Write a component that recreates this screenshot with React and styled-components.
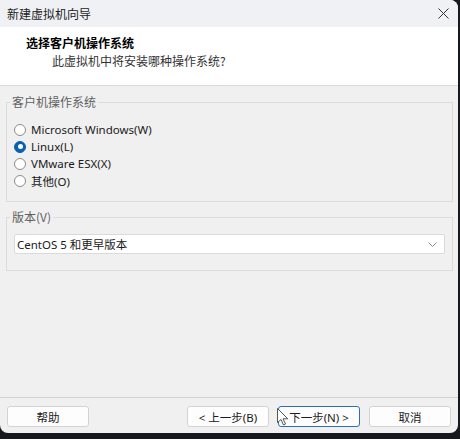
import React from "react";
import styled, { createGlobalStyle } from "styled-components";

const GlobalStyle = createGlobalStyle`
  html, body {
    margin: 0;
    padding: 0;
    background: #16181d;
  }
  * {
    box-sizing: border-box;
  }
`;

const sans = `"Noto Sans", "Noto Sans CJK SC", sans-serif`;
const cjk = `"Noto Sans CJK SC", "Noto Sans", sans-serif`;

const Desktop = styled.div`
  width: 460px;
  height: 439px;
  background: #16181d;
  overflow: hidden;
`;

const Window = styled.div`
  width: 458px;
  height: 433px;
  background: #f0f0f0;
  border-radius: 0 8px 8px 8px;
  overflow: hidden;
  display: flex;
  flex-direction: column;
  font-family: ${sans};
  color: #1a1a1a;
`;

const TitleBar = styled.div`
  height: 27px;
  flex-shrink: 0;
  background: #eff1f5;
  display: flex;
  align-items: center;
  justify-content: space-between;
  padding: 0 9px 0 7px;
`;

const Title = styled.span`
  font-family: ${cjk};
  font-size: 12px;
  color: #1b1b1b;
`;

const CloseButton = styled.button`
  width: 12px;
  height: 12px;
  padding: 0;
  border: none;
  background: transparent;
  display: flex;
  align-items: center;
  justify-content: center;
  color: #333;
`;

const Header = styled.div`
  height: 59px;
  flex-shrink: 0;
  background: #ffffff;
  border-bottom: 1px solid #d9d9d9;
  padding: 7px 0 0 26px;
  display: flex;
  flex-direction: column;
`;

const HeaderTitle = styled.div`
  font-family: ${cjk};
  font-size: 12px;
  font-weight: 700;
  line-height: 18px;
  color: #000;
`;

const HeaderSub = styled.div`
  font-family: ${cjk};
  font-size: 12px;
  line-height: 18px;
  color: #333;
  margin-left: 26px;
`;

const Body = styled.div`
  flex: 1;
  padding: 8px 5px 0 6px;
  display: flex;
  flex-direction: column;
  gap: 7px;
`;

const Group = styled.fieldset`
  margin: 0;
  border: 1px solid #dcdcdc;
  padding: 0 7px ${({ $bottom }) => $bottom}px 7px;
  min-width: 0;
`;

const Legend = styled.legend`
  font-family: ${cjk};
  font-size: 12px;
  line-height: 16px;
  color: #5f5f5f;
  padding: 0 2px;
  margin-left: -4px;
`;

const RadioList = styled.div`
  margin-top: 11px;
  display: flex;
  flex-direction: column;
`;

const RadioRow = styled.label`
  height: 17px;
  display: flex;
  align-items: center;
  gap: 5px;
  font-size: 11.5px;
  color: #1a1a1a;
`;

const RadioDot = styled.span`
  width: 12px;
  height: 12px;
  border-radius: 50%;
  flex-shrink: 0;
  display: flex;
  align-items: center;
  justify-content: center;
  background: ${({ $checked }) => ($checked ? "#0a5fb4" : "#ffffff")};
  border: 1px solid ${({ $checked }) => ($checked ? "#0a5fb4" : "#8c8c8c")};

  &::after {
    content: "";
    display: ${({ $checked }) => ($checked ? "block" : "none")};
    width: 5px;
    height: 5px;
    border-radius: 50%;
    background: #ffffff;
  }
`;

const Select = styled.div`
  margin-top: 9px;
  height: 20px;
  background: #ffffff;
  border: 1px solid #dadada;
  border-radius: 2px;
  display: flex;
  align-items: center;
  justify-content: space-between;
  padding: 0 7px 0 2px;
  font-size: 11.5px;
  color: #1a1a1a;
`;

const Footer = styled.div`
  height: 36px;
  flex-shrink: 0;
  border-top: 1px solid #d2d2d2;
  padding: 8px 7px 0 7px;
  display: flex;
  align-items: flex-start;
  justify-content: space-between;
`;

const ButtonGroup = styled.div`
  display: flex;
  gap: 9px;
`;

const Button = styled.button`
  position: relative;
  width: 82px;
  height: 21px;
  padding: 0;
  background: #fdfdfd;
  border: 1px solid ${({ $focused }) => ($focused ? "#2c6fb8" : "#d3d3d3")};
  border-radius: 3px;
  font-family: ${sans};
  font-size: 11.5px;
  color: #1a1a1a;
  display: flex;
  align-items: center;
  justify-content: center;
`;

const Cursor = styled.svg`
  position: absolute;
  left: -2px;
  top: 1px;
  pointer-events: none;
`;

const options = [
  { label: "Microsoft Windows(W)", checked: false },
  { label: "Linux(L)", checked: true },
  { label: "VMware ESX(X)", checked: false },
  { label: "其他(O)", checked: false },
];

const App = () => {
  return (
    <>
      <GlobalStyle />
      <Desktop>
        <Window>
          <TitleBar>
            <Title>新建虚拟机向导</Title>
            <CloseButton>
              <svg width="11" height="11" viewBox="0 0 11 11">
                <path d="M0.5 0.5 L10.5 10.5 M10.5 0.5 L0.5 10.5" stroke="currentColor" strokeWidth="1" fill="none" />
              </svg>
            </CloseButton>
          </TitleBar>
          <Header>
            <HeaderTitle>选择客户机操作系统</HeaderTitle>
            <HeaderSub>此虚拟机中将安装哪种操作系统?</HeaderSub>
          </Header>
          <Body>
            <Group $bottom={12}>
              <Legend>客户机操作系统</Legend>
              <RadioList>
                {options.map((o) => (
                  <RadioRow key={o.label}>
                    <RadioDot $checked={o.checked} />
                    {o.label}
                  </RadioRow>
                ))}
              </RadioList>
            </Group>
            <Group $bottom={16}>
              <Legend>版本(V)</Legend>
              <Select>
                <span>CentOS 5 和更早版本</span>
                <svg width="9" height="5" viewBox="0 0 9 5">
                  <path d="M0.5 0.5 L4.5 4.5 L8.5 0.5" stroke="#8a8a8a" strokeWidth="1" fill="none" />
                </svg>
              </Select>
            </Group>
          </Body>
          <Footer>
            <Button>帮助</Button>
            <ButtonGroup>
              <Button>&lt; 上一步(B)</Button>
              <Button $focused>
                下一步(N) &gt;
                <Cursor width="12" height="18" viewBox="0 0 12 18">
                  <path d="M0.5 0.5 L0.5 14.5 L4 11.5 L6.5 17 L8.5 16 L6 10.8 L10.8 10.8 Z" fill="#ffffff" stroke="#555" strokeWidth="1" />
                </Cursor>
              </Button>
              <Button>取消</Button>
            </ButtonGroup>
          </Footer>
        </Window>
      </Desktop>
    </>
  );
};

export default App;
